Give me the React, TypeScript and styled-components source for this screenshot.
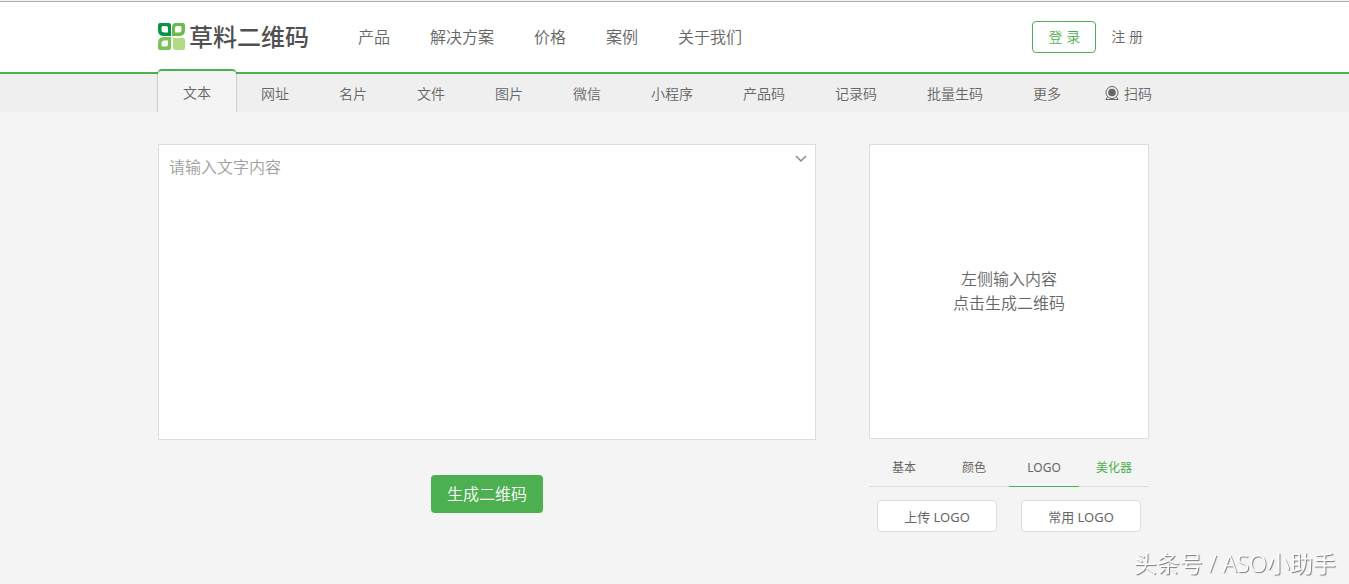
import React from 'react';
import styled, { createGlobalStyle } from 'styled-components';

const green = '#4caf50';

const GlobalStyle = createGlobalStyle`
  * { box-sizing: border-box; }
  body {
    margin: 0;
    background: #f4f4f4;
    color: #666;
    font-family: "Noto Sans", "Noto Sans CJK SC", sans-serif;
    font-size: 14px;
    font-weight: 350;
    line-height: 20px;
  }
  a { color: inherit; text-decoration: none; }
  button, textarea { font: inherit; color: inherit; margin: 0; }
`;

const Container = styled.div`
  max-width: 1033px;
  margin: 0 auto;
`;

const Header = styled.header`
  margin-top: 1px;
  background: #fff;
  border-top: 1px solid #aaa;
  border-bottom: 2px solid ${green};
`;

const HeaderRow = styled(Container)`
  display: flex;
  align-items: center;
  height: 70px;
`;

const Logo = styled.a`
  display: flex;
  align-items: center;
  gap: 3px;
  margin-right: 49px;
  color: #505050;
  font-size: 24px;
  font-weight: 500;
  line-height: 28px;
  white-space: nowrap;
`;

const MainNav = styled.nav`
  display: flex;
  gap: 40px;
  font-size: 16px;
  line-height: 24px;
  white-space: nowrap;
`;

const Account = styled.div`
  display: flex;
  align-items: center;
  gap: 15px;
  margin-left: auto;
  margin-right: 48px;
  white-space: nowrap;
`;

const LoginButton = styled.button`
  width: 64px;
  height: 32px;
  padding: 0;
  border: 1px solid ${green};
  border-radius: 4px;
  background: #fff;
  color: ${green};
`;

const TypeBar = styled.nav`
  background: #efefef;
`;

const TypeRow = styled(Container)`
  display: flex;
  height: 38px;
`;

const TypeTab = styled.a<{ $active?: boolean }>`
  display: flex;
  align-items: center;
  gap: 5px;
  padding: 2px 25px 0;
  white-space: nowrap;
  &:last-child { padding-left: 19px; }
  ${({ $active }) => $active && `
    position: relative;
    margin-top: -5px;
    border-top: 2px solid ${green};
    border-radius: 4px 4px 0 0;
    background: #f4f4f4;
    box-shadow: 0 1px 2px rgba(0, 0, 0, 0.45);
    clip-path: inset(0 -3px 0 -3px);
  `}
`;

const Workspace = styled(Container)`
  display: grid;
  grid-template-columns: minmax(0, 1fr) 280px;
  gap: 53px;
  align-items: start;
  padding: 32px 42px 32px 0;
`;

const Editor = styled.section`
  display: flex;
  flex-direction: column;
  align-items: center;
  gap: 35px;
`;

const InputWrap = styled.div`
  position: relative;
  display: flex;
  width: 100%;
`;

const TextInput = styled.textarea`
  width: 100%;
  height: 296px;
  padding: 10px;
  border: 1px solid #ddd;
  border-radius: 0;
  background: #fff;
  outline: none;
  resize: none;
  font-size: 16px;
  line-height: 24px;
  &::placeholder { color: #a0a0a0; opacity: 1; }
`;

const ExpandButton = styled.button`
  position: absolute;
  top: 8px;
  right: 8px;
  display: flex;
  padding: 0;
  border: 0;
  background: none;
`;

const GenerateButton = styled.button`
  height: 38px;
  padding: 0 16px;
  border: 0;
  border-radius: 4px;
  background: ${green};
  color: #fff;
  font-size: 16px;
`;

const Preview = styled.div`
  display: flex;
  align-items: center;
  justify-content: center;
  height: 295px;
  padding-bottom: 2px;
  border: 1px solid #ddd;
  background: #fff;
  font-size: 16px;
  line-height: 24px;
  text-align: center;
`;

const StyleTabs = styled.div`
  display: grid;
  grid-template-columns: repeat(4, 1fr);
  margin-top: 10px;
`;

const StyleTab = styled.button<{ $active?: boolean; $accent?: boolean }>`
  height: 38px;
  padding: 0;
  border: 0;
  border-bottom: 1px solid ${({ $active }) => ($active ? green : '#ddd')};
  background: none;
  color: ${({ $accent }) => ($accent ? green : 'inherit')};
  font-size: 12px;
  font-weight: 400;
`;

const LogoActions = styled.div`
  display: grid;
  grid-template-columns: 1fr 1fr;
  gap: 24px;
  padding: 13px 8px 0;
`;

const LogoButton = styled.button`
  height: 32px;
  padding: 2px 0 0;
  border: 1px solid #ddd;
  border-radius: 4px;
  background: #fff;
  font-size: 13px;
  font-weight: 400;
`;

const Watermark = styled.div`
  position: fixed;
  right: 13px;
  bottom: 7px;
  color: #fff;
  font-size: 23px;
  line-height: 28px;
  text-shadow: 1px 1px 1px #777;
  white-space: nowrap;
`;

const LogoMark = () => (
  <svg width="28" height="28" viewBox="0 0 28 28" aria-hidden="true">
    <path fillRule="evenodd" fill="#079447" d="M2 0h9q2 0 2 2v11H6Q0 13 0 7V2Q0 0 2 0ZM5 3Q3.500 3 3.500 4.500V7q0 2.500 3 2.500h3.500V5q0-2-2-2Z" />
    <path fillRule="evenodd" fill="#6abb4b" d="M18 0h7q2 0 2 2v5q0 6-6 6h-7V4q0-4 4-4Zm1 3q-2 0-2 2v4.500h4q2.500 0 2.500-2.500V4.500q0-1.500-1.500-1.500Z" />
    <path fillRule="evenodd" fill="#79c456" d="M6 14h7v11q0 2-2 2H2q-2 0-2-2v-5q0-6 6-6Zm.5 3.500q-3 0-3 3V22q0 1.500 1.500 1.500h3q2 0 2-2v-4Z" />
    <path fill="#b1dc84" d="M14 14l2 1h9q2 0 2 2v8q0 2-2 2h-7q-3 0-3-3v-8Z" />
  </svg>
);

const ScanIcon = () => (
  <svg width="14" height="16" viewBox="0 0 14 16" fill="none" stroke="#666" aria-hidden="true">
    <circle cx="7" cy="6.500" r="6" />
    <circle cx="7" cy="6.500" r="3.800" fill="#666" stroke="none" />
    <path d="M2.500 11 .8 13.500h12.400L11.500 11" />
  </svg>
);

const mainLinks = ['产品', '解决方案', '价格', '案例', '关于我们'];
const types = ['文本', '网址', '名片', '文件', '图片', '微信', '小程序', '产品码', '记录码', '批量生码', '更多'];

export default function App() {
  return (
    <>
      <GlobalStyle />
      <Header>
        <HeaderRow>
          <Logo href="#"><LogoMark />草料二维码</Logo>
          <MainNav>
            {mainLinks.map((label) => <a href="#" key={label}>{label}</a>)}
          </MainNav>
          <Account>
            <LoginButton type="button">登 录</LoginButton>
            <a href="#">注 册</a>
          </Account>
        </HeaderRow>
      </Header>
      <TypeBar>
        <TypeRow>
          {types.map((label, i) => (
            <TypeTab href="#" key={label} $active={i === 0}>{label}</TypeTab>
          ))}
          <TypeTab href="#"><ScanIcon />扫码</TypeTab>
        </TypeRow>
      </TypeBar>
      <Workspace as="main">
        <Editor>
          <InputWrap>
            <TextInput aria-label="文字内容" placeholder="请输入文字内容" />
            <ExpandButton type="button" aria-label="展开">
              <svg width="14" height="14" viewBox="0 0 14 14" fill="none" stroke="#888" strokeWidth="1.500" aria-hidden="true">
                <path d="m2 4 5 5 5-5" />
              </svg>
            </ExpandButton>
          </InputWrap>
          <GenerateButton type="button">生成二维码</GenerateButton>
        </Editor>
        <aside>
          <Preview>左侧输入内容<br />点击生成二维码</Preview>
          <StyleTabs>
            <StyleTab type="button">基本</StyleTab>
            <StyleTab type="button">颜色</StyleTab>
            <StyleTab type="button" $active>LOGO</StyleTab>
            <StyleTab type="button" $accent>美化器</StyleTab>
          </StyleTabs>
          <LogoActions>
            <LogoButton type="button">上传 LOGO</LogoButton>
            <LogoButton type="button">常用 LOGO</LogoButton>
          </LogoActions>
        </aside>
      </Workspace>
      <Watermark>头条号 / ASO小助手</Watermark>
    </>
  );
}
